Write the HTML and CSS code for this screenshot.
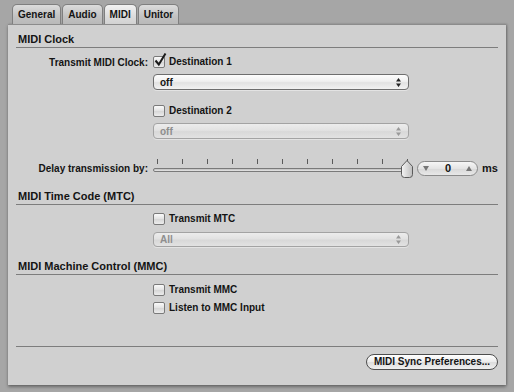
FILE: index.html
```html
<!DOCTYPE html>
<html lang="en">
<head>
    <meta charset="UTF-8">
    <title>Synchronization - MIDI</title>
    <link rel="stylesheet" href="styles.css">
</head>
<body>
    <div class="window">
        <div class="tabs">
            <div class="tab">General</div>
            <div class="tab">Audio</div>
            <div class="tab active">MIDI</div>
            <div class="tab">Unitor</div>
        </div>

        <div class="panel">
            <!-- MIDI Clock -->
            <div class="section-title first">MIDI Clock</div>

            <div class="row row-clock">
                <span class="label">Transmit MIDI Clock:</span>
                <label class="check">
                    <span class="box">
                        <svg class="tick" width="14" height="15" viewBox="0 0 14 15"><path d="M2.5 7.5 L5.8 11.5 L12.5 0.5" fill="none" stroke="#1a1a1a" stroke-width="2"/></svg>
                    </span>
                    Destination 1
                </label>
            </div>

            <div class="row row-popup">
                <span class="label"></span>
                <div class="popup">
                    <span>off</span>
                    <svg class="arrows" width="5" height="9" viewBox="0 0 5 9"><path d="M2.5 0 L5 3.5 L0 3.5 Z M0 5.5 L5 5.5 L2.5 9 Z" fill="#222"/></svg>
                </div>
            </div>

            <div class="row row-dest2">
                <span class="label"></span>
                <label class="check"><span class="box"></span>Destination 2</label>
            </div>

            <div class="row row-popup">
                <span class="label"></span>
                <div class="popup disabled">
                    <span>off</span>
                    <svg class="arrows" width="5" height="9" viewBox="0 0 5 9"><path d="M2.5 0 L5 3.5 L0 3.5 Z M0 5.5 L5 5.5 L2.5 9 Z" fill="#999"/></svg>
                </div>
            </div>

            <div class="row row-delay">
                <span class="label">Delay transmission by:</span>
                <div class="delay">
                    <div class="slider">
                        <div class="ticks">
                            <i></i><i></i><i></i><i></i><i></i><i></i><i></i><i></i><i></i><i></i><i></i>
                        </div>
                        <div class="track"></div>
                        <svg class="knob" width="12" height="18" viewBox="0 0 12 18">
                            <defs>
                                <linearGradient id="kg" x1="0" y1="0" x2="1" y2="0">
                                    <stop offset="0" stop-color="#f4f4f4"/>
                                    <stop offset="1" stop-color="#bdbdbd"/>
                                </linearGradient>
                            </defs>
                            <path d="M6 0.5 L11.5 6.5 L11.5 14.5 Q11.5 17.5 8.5 17.5 L3.5 17.5 Q0.5 17.5 0.5 14.5 L0.5 6.5 Z" fill="url(#kg)" stroke="#5a5a5a"/>
                        </svg>
                    </div>
                    <div class="stepper">
                        <svg width="6" height="5" viewBox="0 0 6 5"><path d="M0 0 L6 0 L3 5 Z" fill="#777"/></svg>
                        <span class="value">0</span>
                        <svg width="6" height="5" viewBox="0 0 6 5"><path d="M3 0 L6 5 L0 5 Z" fill="#777"/></svg>
                    </div>
                    <span class="unit">ms</span>
                </div>
            </div>

            <!-- MIDI Time Code -->
            <div class="section-title">MIDI Time Code (MTC)</div>

            <div class="row row-mtc">
                <span class="label"></span>
                <label class="check"><span class="box"></span>Transmit MTC</label>
            </div>

            <div class="row row-all">
                <span class="label"></span>
                <div class="popup disabled small">
                    <span>All</span>
                    <svg class="arrows" width="5" height="9" viewBox="0 0 5 9"><path d="M2.5 0 L5 3.5 L0 3.5 Z M0 5.5 L5 5.5 L2.5 9 Z" fill="#999"/></svg>
                </div>
            </div>

            <!-- MIDI Machine Control -->
            <div class="section-title">MIDI Machine Control (MMC)</div>

            <div class="row row-mmc">
                <span class="label"></span>
                <label class="check"><span class="box"></span>Transmit MMC</label>
            </div>

            <div class="row row-listen">
                <span class="label"></span>
                <label class="check"><span class="box"></span>Listen to MMC Input</label>
            </div>

            <div class="separator"></div>

            <div class="footer">
                <button class="btn">MIDI Sync Preferences...</button>
            </div>
        </div>
    </div>
</body>
</html>
```

FILE: styles.css
```css
* {
    margin: 0;
    padding: 0;
    box-sizing: border-box;
}

body {
    background: #a6a6a6;
    font-family: 'Liberation Sans', Arial, sans-serif;
    font-size: 10px;
    font-weight: bold;
    color: #141414;
    width: 514px;
    height: 392px;
    overflow: hidden;
}

.window {
    padding-top: 4px;
}

/* tabs */
.tabs {
    display: flex;
    gap: 1px;
    padding-left: 12px;
    height: 20px;
}

.tab {
    height: 20px;
    line-height: 19px;
    padding: 0 5px;
    border: 1px solid #7f7f7f;
    border-bottom: none;
    border-radius: 5px 5px 0 0;
    background: linear-gradient(#dcdcdc, #c2c2c2 60%, #b9b9b9);
    font-size: 10px;
}

.tab.active {
    background: linear-gradient(#f2f2f2, #dcdcdc 60%, #d2d2d2);
}

/* panel */
.panel {
    margin-left: 8px;
    width: 498px;
    height: 361px;
    background: #d0d0d0;
    border-top: 1px solid #8c8c8c;
    padding: 0 8px;
    box-shadow: 0 2px 3px rgba(0,0,0,0.35), 1px 0 2px rgba(0,0,0,0.2);
    display: flex;
    flex-direction: column;
}

.section-title {
    font-size: 11px;
    height: 17px;
    line-height: 16px;
    padding-left: 2px;
    border-bottom: 1px solid #7d7d7d;
    margin-top: 11px;
}

.section-title.first {
    margin-top: 6px;
}

.row {
    display: grid;
    grid-template-columns: 132px auto;
    column-gap: 5px;
    align-items: center;
}

.label {
    text-align: right;
}

.row-clock { margin-top: 7px; height: 14px; }
.row-popup { margin-top: 5px; }
.row-dest2 { margin-top: 14px; height: 14px; }
.row-delay { margin-top: 20px; height: 18px; }
.row-mtc { margin-top: 7px; height: 14px; }
.row-all { margin-top: 6px; }
.row-mmc { margin-top: 8px; height: 14px; }
.row-listen { margin-top: 4px; height: 14px; }

/* checkbox */
.check {
    display: flex;
    align-items: center;
    gap: 4px;
    line-height: 14px;
}

.box {
    position: relative;
    width: 12px;
    height: 12px;
    border: 1px solid #7a7a7a;
    border-radius: 2px;
    background: linear-gradient(#fafafa, #e2e2e2 50%, #d6d6d6 51%, #ececec);
}

.tick {
    position: absolute;
    left: -1px;
    top: -4px;
}

/* popup menus */
.popup {
    width: 256px;
    height: 16px;
    border: 1px solid #6e6e6e;
    border-radius: 4px;
    background: linear-gradient(#fdfdfd, #f0f0f0 45%, #e2e2e2 55%, #f2f2f2);
    display: flex;
    align-items: center;
    justify-content: space-between;
    padding: 0 6px 0 6px;
    box-shadow: 0 1px 0 rgba(255,255,255,0.4);
}

.popup.small {
    height: 15px;
}

.popup.disabled {
    border-color: #a3a3a3;
    color: #8e8e8e;
    background: linear-gradient(#ececec, #e2e2e2 45%, #d8d8d8 55%, #e2e2e2);
}

.arrows {
    margin-right: 1px;
}

/* slider */
.delay {
    display: flex;
    align-items: center;
}

.slider {
    position: relative;
    width: 256px;
    height: 18px;
}

.ticks {
    display: flex;
    justify-content: space-between;
    padding: 0 1px 0 4px;
    height: 5px;
}

.ticks i {
    width: 1px;
    height: 5px;
    background: #5a5a5a;
}

.track {
    margin-top: 4px;
    width: 255px;
    height: 4px;
    border: 1px solid #7a7a7a;
    border-radius: 2px;
    background: linear-gradient(#bdbdbd, #e8e8e8);
}

.knob {
    position: absolute;
    left: 248px;
    top: 1px;
}

.stepper {
    margin-left: 8px;
    width: 61px;
    height: 15px;
    border: 1px solid #8a8a8a;
    border-radius: 8px;
    background: linear-gradient(#f6f6f6, #e4e4e4 50%, #d8d8d8 51%, #e8e8e8);
    display: flex;
    align-items: center;
    padding: 0 5px 0 5px;
}

.stepper .value {
    flex: 1;
    text-align: right;
    padding-right: 15px;
    font-size: 11px;
}

.unit {
    margin-left: 4px;
    font-size: 11px;
}

/* footer */
.separator {
    margin-top: 31px;
    height: 1px;
    background: #7d7d7d;
}

.footer {
    display: flex;
    justify-content: flex-end;
    margin-top: 7px;
}

.btn {
    width: 132px;
    height: 16px;
    border: 1px solid #4e4e4e;
    border-radius: 8px;
    background: linear-gradient(#ffffff, #ececec 50%, #dcdcdc 51%, #f0f0f0);
    font-family: 'Liberation Sans', Arial, sans-serif;
    font-size: 10px;
    font-weight: bold;
    color: #141414;
    line-height: 14px;
}
```
